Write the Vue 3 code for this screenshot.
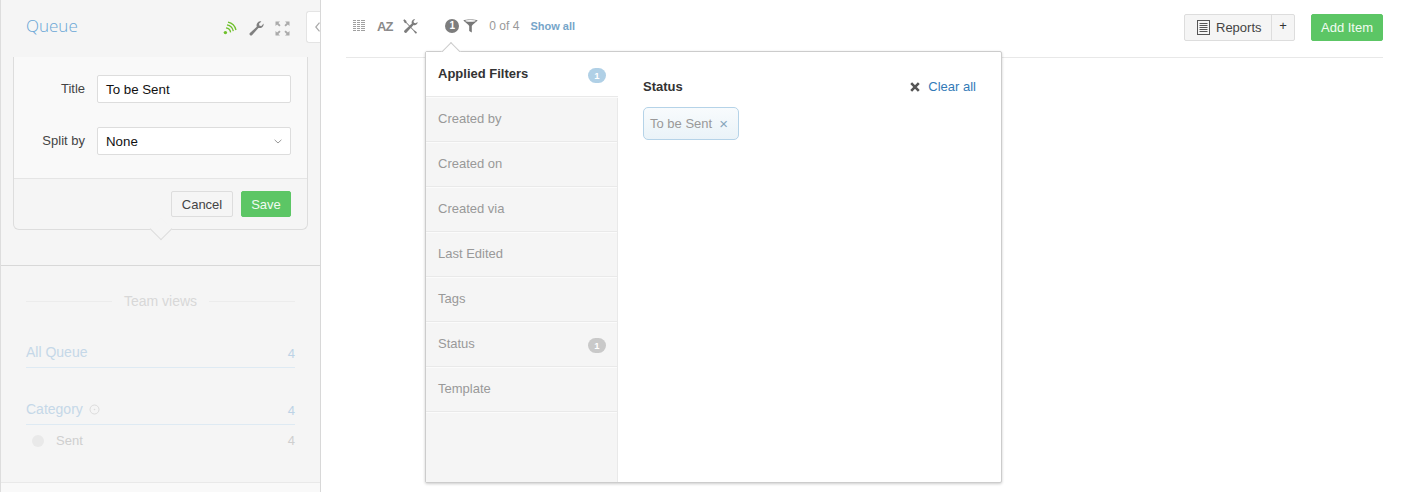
<script setup>
const filters = [
  { name: 'Created by' },
  { name: 'Created on' },
  { name: 'Created via' },
  { name: 'Last Edited' },
  { name: 'Tags' },
  { name: 'Status', count: 1 },
  { name: 'Template' }
]
</script>

<template>
  <div class="page">
    <aside class="side">
      <header class="side-head">
        <span class="queue">Queue</span>
        <div class="head-icons">
          <svg width="15" height="15" viewBox="0 0 15 15" fill="none" stroke="#6fc02c" stroke-width="1.3">
            <circle cx="2.400" cy="11.600" r="1.700" fill="#6fc02c" stroke="none" />
            <path d="M3 6.800a5.200 5.200 0 0 1 4.600 4.600" />
            <path d="M4 3.900a7.800 7.800 0 0 1 6.300 6.300" />
            <path d="M5 1.200a10.600 10.600 0 0 1 8 7.800" />
          </svg>
          <svg width="15" height="15" viewBox="0 0 15 15" fill="#808080">
            <path d="M14.600 2.600a4 4 0 0 1-5.200 4.300L3.200 14a1.500 1.500 0 0 1-2.300-2L7.800 5.700A4 4 0 0 1 12.400.4L10 2.800l.5 1.900 1.900.4z" />
          </svg>
          <svg width="15" height="15" viewBox="0 0 15 15" fill="#aaa">
            <path d="M0.500 0.500h4.500L3.400 2.100 5.600 4.300 4.300 5.600 2.100 3.400 0.500 5z" />
            <path d="M14.500 0.500H10l1.600 1.600-2.200 2.200 1.300 1.300 2.200-2.200L14.500 5z" />
            <path d="M0.500 14.500H5l-1.600-1.600 2.200-2.200-1.300-1.300-2.200 2.200L0.500 10z" />
            <path d="M14.500 14.500H10l1.600-1.600-2.200-2.200 1.300-1.300 2.200 2.200 1.600-1.600z" />
          </svg>
        </div>
        <button class="collapse" type="button" aria-label="Collapse">
          <svg width="5" height="10" viewBox="0 0 5 10" fill="none" stroke="#aaa" stroke-width="1.200"><path d="M4.500.6.800 5l3.700 4.400" /></svg>
        </button>
      </header>

      <section class="card">
        <div class="card-body">
          <label class="field">
            <span class="field-label">Title</span>
            <span class="control">To be Sent</span>
          </label>
          <label class="field">
            <span class="field-label">Split by</span>
            <span class="control select">
              None
              <svg width="8" height="5" viewBox="0 0 8 5" fill="none" stroke="#999" stroke-width="1"><path d="m.6.8 3.400 3.200L7.400.8" /></svg>
            </span>
          </label>
        </div>
        <div class="card-foot">
          <button class="btn cancel" type="button">Cancel</button>
          <button class="btn green save" type="button">Save</button>
        </div>
        <i class="card-arrow"></i>
      </section>

      <section class="views">
        <div class="views-title"><span>Team views</span></div>
        <div class="view-row first"><span>All Queue</span><em>4</em></div>
        <div class="view-row second">
          <span>Category
            <svg width="11" height="11" viewBox="0 0 11 11" fill="none" stroke="#dcdcdc"><circle cx="5.500" cy="5.500" r="4.500" /><circle cx="5.500" cy="5.500" r="0.800" fill="#dcdcdc" stroke="none" /></svg>
          </span>
          <em>4</em>
        </div>
        <div class="sub-row"><i class="dot"></i><span>Sent</span><em>4</em></div>
      </section>
      <div class="side-end"></div>
    </aside>

    <main class="main">
      <div class="toolbar">
        <svg class="t-grid" width="12" height="12" viewBox="0 0 12 12" fill="none" stroke="#a0a0a0">
          <path d="M0 .5h12M0 2.500h12M0 4.500h12M0 6.500h12M0 8.500h12M0 10.500h12" />
          <path d="M3.500 0v12M7.500 0v12" stroke="#fff" />
        </svg>
        <span class="az">AZ</span>
        <svg class="t-tools" width="15" height="15" viewBox="0 0 15 15" fill="#7d7d7d">
          <path d="M1.300 0.300 0.300 1.300 1.800 3.900l1.500.4 6.900 7.300 2 2.700c.8.800 2.200-.5 1.400-1.400l-2.700-2L3.700 3.500 3.200 1.700z" />
          <path d="M14.600 3a3 3 0 0 1-4 3L3.600 13.400a1.400 1.400 0 0 1-2.200-1.800L8.800 4.500A3 3 0 0 1 12.200.4l-1.700 1.700.4 1.700 1.700.4z" />
        </svg>
        <span class="num">1</span>
        <svg class="t-funnel" width="15" height="14" viewBox="0 0 15 14" fill="none">
          <path d="M0.300 1.500C2.500.2 12.500.2 14.700 1.500 12.500 3.400 9.500 5.500 8.800 7v6.500L6.200 12V7C5.500 5.500 2.500 3.400.3 1.500z" fill="#777" />
          <ellipse cx="7.500" cy="1.900" rx="5.200" ry="0.800" fill="#fff" />
        </svg>
        <span class="of">0 of 4</span>
        <a class="show">Show all</a>
        <div class="spacer"></div>
        <div class="reports">
          <span class="rep-main">
            <svg width="13" height="15" viewBox="0 0 13 15" fill="none" stroke="#555"><rect x="0.500" y="0.500" width="12" height="14" /><path d="M2.500 3.500h8M2.500 5.500h8M2.500 7.500h8M2.500 9.500h8M2.500 11.500h8" /></svg>
            Reports
          </span>
          <span class="rep-plus">+</span>
        </div>
        <button class="btn green add" type="button">Add Item</button>
      </div>

      <div class="pop">
        <i class="pop-arrow"></i>
        <nav class="pop-nav">
          <div class="applied"><span>Applied Filters</span><b class="pill blue">1</b></div>
          <div v-for="f in filters" :key="f.name" class="nav-row">
            <span>{{ f.name }}</span>
            <b v-if="f.count" class="pill">{{ f.count }}</b>
          </div>
        </nav>
        <div class="pop-body">
          <div class="pop-top">
            <strong>Status</strong>
            <a class="clear">
              <svg width="10" height="10" viewBox="0 0 10 10" fill="none" stroke="#555" stroke-width="2.600"><path d="m1.200 1.200 7.600 7.600M8.800 1.200 1.200 8.800" /></svg>
              Clear all
            </a>
          </div>
          <span class="chip">To be Sent <i>×</i></span>
        </div>
      </div>
    </main>
  </div>
</template>

<style>
html, body { margin: 0; background: #fff; }
</style>

<style scoped>
.page {
  display: flex;
  width: 1408px;
  height: 492px;
  overflow: hidden;
  font-family: "Liberation Sans", Arial, sans-serif;
  font-size: 13px;
  color: #333;
}
.side {
  position: relative;
  box-sizing: border-box;
  width: 321px;
  height: 492px;
  flex: none;
  background: #f5f5f5;
  border-left: 1px solid #ddd;
  border-right: 1px solid #d8d8d8;
  display: flex;
  flex-direction: column;
}
.side-head {
  height: 57px;
  flex: none;
  display: flex;
  align-items: flex-start;
  padding: 15px 0 0 25px;
  box-sizing: border-box;
}
.queue {
  font-family: "Open Sans", "Liberation Sans", sans-serif;
  font-size: 17px;
  font-weight: 300;
  line-height: 21px;
  color: #69a6d6;
  flex: 1;
}
.head-icons {
  display: flex;
  gap: 11px;
  padding-top: 6px;
  margin-right: 30px;
}
.collapse {
  position: absolute;
  right: 0;
  top: 11px;
  width: 14px;
  height: 32px;
  padding: 0 0 0 8px;
  background: #fff;
  border: 1px solid #e4e4e4;
  border-right: 0;
  border-radius: 3px 0 0 3px;
  display: flex;
  align-items: center;
  justify-content: flex-start;
}
.card {
  position: relative;
  margin: 0 12px;
  height: 173px;
  box-sizing: border-box;
  border: 1px solid #ddd;
  border-top: 0;
  border-radius: 0 0 6px 6px;
  background: #f5f5f5;
  flex: none;
}
.card-body {
  height: 122px;
  box-sizing: border-box;
  background: #f9f9f9;
  border-bottom: 1px solid #e5e5e5;
  padding-top: 18px;
  display: flex;
  flex-direction: column;
  gap: 24px;
}
.field {
  display: flex;
  align-items: center;
  height: 28px;
}
.field-label {
  width: 71px;
  text-align: right;
  margin-right: 12px;
  color: #444;
  line-height: 15px;
  margin-top: -1px;
}
.control {
  box-sizing: border-box;
  width: 194px;
  height: 28px;
  display: flex;
  align-items: center;
  justify-content: space-between;
  background: #fff;
  border: 1px solid #ddd;
  border-radius: 2px;
  padding: 0 8px;
  color: #111;
  font-size: 13.300px;
}
.card-foot {
  display: flex;
  justify-content: flex-end;
  gap: 8px;
  padding: 12px 16px 0 0;
}
.btn {
  box-sizing: border-box;
  height: 26px;
  padding: 0;
  font: 13px "Liberation Sans", Arial, sans-serif;
  color: #444;
  background: #f5f5f5;
  border: 1px solid #ddd;
  border-radius: 2px;
}
.btn.cancel { width: 62px; }
.btn.save { width: 50px; }
.btn.green {
  background: #5cc665;
  border-color: #5cc665;
  color: #f1fbf1;
}
.card-arrow {
  position: absolute;
  left: 139px;
  bottom: -8px;
  width: 15px;
  height: 15px;
  background: #f5f5f5;
  border-right: 1px solid #ddd;
  border-bottom: 1px solid #ddd;
  transform: rotate(45deg);
}
.views {
  margin-top: 35px;
  border-top: 1px solid #d8d8d8;
  padding: 27px 25px 0;
  height: 217px;
  box-sizing: border-box;
  flex: none;
}
.views-title {
  display: flex;
  align-items: center;
  gap: 12px;
  color: #d8d8d8;
  font-size: 14px;
  line-height: 16px;
}
.views-title::before,
.views-title::after {
  content: "";
  flex: 1;
  border-top: 1px solid #ececec;
}
.view-row {
  display: flex;
  justify-content: space-between;
  align-items: flex-end;
  font-size: 14px;
  color: #c5d8e8;
  border-bottom: 1px solid #deeaf3;
  padding-bottom: 7px;
  line-height: 16px;
}
.view-row.first { margin-top: 35px; }
.view-row.second { margin-top: 33px; }
.view-row span { display: inline-flex; align-items: center; gap: 6px; }
.view-row em {
  font-style: normal;
  font-size: 13px;
  line-height: 14px;
  color: #bdd3e6;
  margin-bottom: -1px;
}
.sub-row {
  display: flex;
  align-items: center;
  margin-top: 8px;
  padding-left: 6px;
  color: #cfcfcf;
  line-height: 15px;
}
.sub-row span { margin-left: 12px; flex: 1; }
.sub-row em { font-style: normal; }
.dot {
  width: 12px;
  height: 12px;
  border-radius: 50%;
  background: #e9e9e9;
}
.side-end {
  flex: 1;
  background: #f9f9f9;
  border-top: 1px solid #e9e9e9;
}
.main {
  position: relative;
  flex: 1;
  padding: 0 25px;
  min-width: 0;
}
.toolbar {
  box-sizing: border-box;
  height: 58px;
  display: flex;
  align-items: flex-start;
  border-bottom: 1px solid #e8e8e8;
  padding: 14px 0 0 7px;
}
.t-grid { margin-top: 6px; }
.az {
  margin: 6px 0 0 12px;
  font-weight: 700;
  font-size: 13px;
  line-height: 14px;
  color: #8a8a8a;
  letter-spacing: -1px;
}
.t-tools { margin: 5px 0 0 11px; }
.num {
  margin: 5px 0 0 27px;
  width: 14px;
  height: 14px;
  border-radius: 50%;
  background: #7d7d7d;
  color: #fff;
  font-size: 10px;
  font-weight: 700;
  line-height: 14px;
  text-align: center;
}
.t-funnel { margin: 5px 0 0 4px; }
.of {
  margin: 5px 0 0 11px;
  font-size: 12px;
  line-height: 14px;
  color: #999;
}
.show {
  margin: 5px 0 0 11px;
  font-size: 11px;
  font-weight: 700;
  line-height: 14px;
  color: #76a5c9;
}
.spacer { flex: 1; }
.reports {
  box-sizing: border-box;
  display: flex;
  height: 27px;
  width: 111px;
  border: 1px solid #ddd;
  border-radius: 2px;
  background: #f5f5f5;
}
.rep-main {
  flex: 1;
  display: flex;
  align-items: center;
  gap: 6px;
  padding-left: 12px;
  color: #444;
  border-right: 1px solid #ddd;
}
.rep-plus {
  width: 22px;
  text-align: center;
  line-height: 21px;
  color: #333;
}
.btn.add {
  width: 72px;
  height: 27px;
  margin-left: 16px;
}
.pop {
  position: absolute;
  left: 104px;
  top: 51px;
  box-sizing: border-box;
  width: 577px;
  height: 432px;
  display: flex;
  background: #fff;
  border: 1px solid #ccc;
  border-radius: 2px;
  box-shadow: 0 1px 3px rgba(0, 0, 0, 0.2);
}
.pop-arrow {
  position: absolute;
  left: 18px;
  top: -7px;
  width: 13px;
  height: 13px;
  background: #fff;
  border-left: 1px solid #ccc;
  border-top: 1px solid #ccc;
  transform: rotate(45deg);
}
.pop-nav {
  position: relative;
  width: 192px;
  box-sizing: border-box;
  flex: none;
  background: #f5f5f5;
  border-right: 1px solid #e9e9e9;
  display: flex;
  flex-direction: column;
}
.applied,
.nav-row {
  box-sizing: border-box;
  display: flex;
  justify-content: space-between;
  padding: 14px 11px 0 12px;
  border-bottom: 1px solid #e9e9e9;
  box-shadow: 0 1px 0 #fbfbfb;
  height: 45px;
  line-height: 15px;
}
.applied {
  margin-right: -1px;
  padding-right: 12px;
  background: #fff;
  font-weight: 700;
  color: #333;
}
.nav-row { color: #999; }
.pill {
  width: 18px;
  height: 15px;
  margin-top: 2px;
  border-radius: 8px;
  background: #c9c9c9;
  color: #fff;
  font-size: 9.500px;
  line-height: 15px;
  text-align: center;
}
.pill.blue { background: #b0d0e6; }
.pop-body {
  flex: 1;
  padding: 27px 25px 0;
}
.pop-top {
  display: flex;
  justify-content: space-between;
  align-items: center;
  line-height: 16px;
}
.pop-top strong { color: #333; }
.clear {
  display: flex;
  align-items: center;
  gap: 8px;
  color: #337ab7;
}
.chip {
  box-sizing: border-box;
  display: inline-flex;
  align-items: center;
  margin-top: 12px;
  height: 33px;
  width: 96px;
  padding: 0 0 0 6px;
  gap: 7px;
  border: 1px solid #b5d3e8;
  border-radius: 5px;
  background: linear-gradient(#f8fbfd, #eaf3f8);
  color: #999;
}
.chip i {
  font-style: normal;
  font-size: 15px;
  line-height: 13px;
  color: #86a5bb;
}
</style>
